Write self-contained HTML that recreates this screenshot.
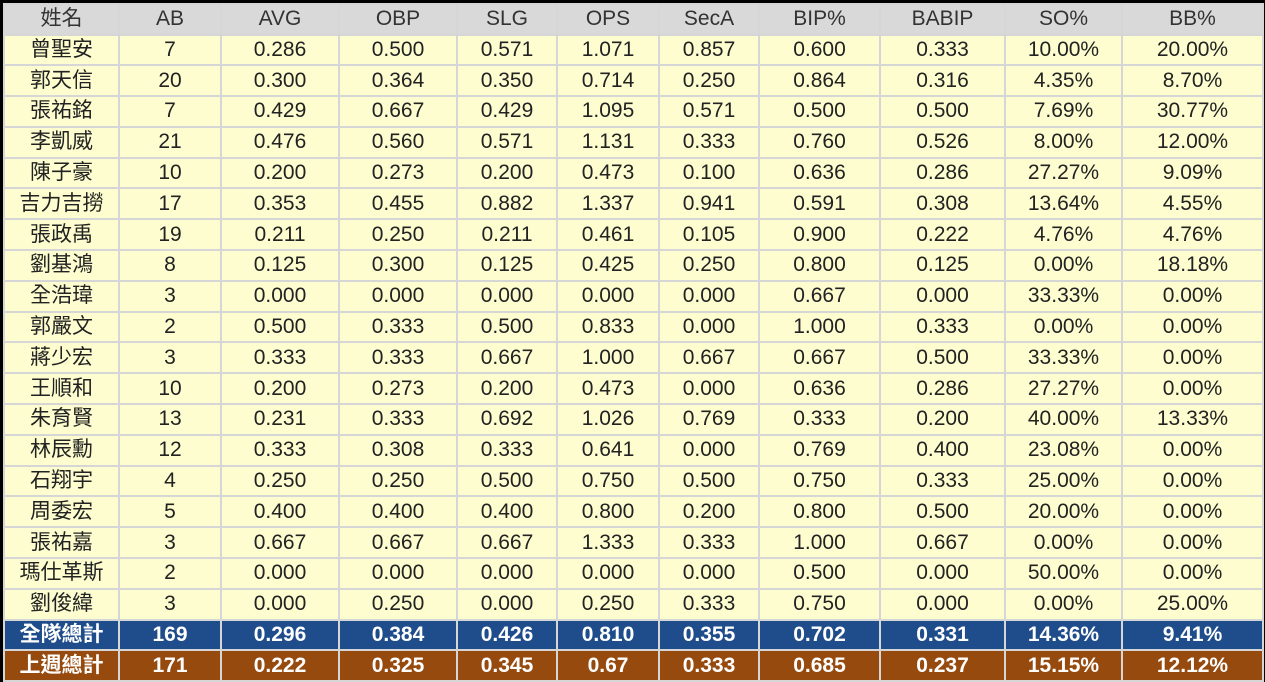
<!DOCTYPE html>
<html><head><meta charset="utf-8"><style>
html,body{margin:0;padding:0;background:#000;width:1265px;height:678px;overflow:hidden}
table{position:absolute;left:3px;top:3px;border-collapse:collapse;table-layout:fixed;font-family:"Liberation Sans","Noto Sans CJK TC",sans-serif;font-size:21px;color:#222}
td{border:2px solid #d6d6d6;text-align:center;padding:0;height:28.8px;line-height:28px;background:#fdfdd0;white-space:nowrap;overflow:hidden}
tr.h td{background:#d9d9d9;color:#333;height:28.5px}
tr.t td{background:#1f4c8a;color:#fff;font-weight:bold}
tr.l td{background:#974a0e;color:#fff;font-weight:bold}
</style></head><body>
<table>
<colgroup><col style="width:115px"><col style="width:102px"><col style="width:118px"><col style="width:118px"><col style="width:100px"><col style="width:102px"><col style="width:100px"><col style="width:121px"><col style="width:125px"><col style="width:117px"><col style="width:141px"></colgroup>
<tr class="h"><td>姓名</td><td>AB</td><td>AVG</td><td>OBP</td><td>SLG</td><td>OPS</td><td>SecA</td><td>BIP%</td><td>BABIP</td><td>SO%</td><td>BB%</td></tr>
<tr><td>曾聖安</td><td>7</td><td>0.286</td><td>0.500</td><td>0.571</td><td>1.071</td><td>0.857</td><td>0.600</td><td>0.333</td><td>10.00%</td><td>20.00%</td></tr>
<tr><td>郭天信</td><td>20</td><td>0.300</td><td>0.364</td><td>0.350</td><td>0.714</td><td>0.250</td><td>0.864</td><td>0.316</td><td>4.35%</td><td>8.70%</td></tr>
<tr><td>張祐銘</td><td>7</td><td>0.429</td><td>0.667</td><td>0.429</td><td>1.095</td><td>0.571</td><td>0.500</td><td>0.500</td><td>7.69%</td><td>30.77%</td></tr>
<tr><td>李凱威</td><td>21</td><td>0.476</td><td>0.560</td><td>0.571</td><td>1.131</td><td>0.333</td><td>0.760</td><td>0.526</td><td>8.00%</td><td>12.00%</td></tr>
<tr><td>陳子豪</td><td>10</td><td>0.200</td><td>0.273</td><td>0.200</td><td>0.473</td><td>0.100</td><td>0.636</td><td>0.286</td><td>27.27%</td><td>9.09%</td></tr>
<tr><td>吉力吉撈</td><td>17</td><td>0.353</td><td>0.455</td><td>0.882</td><td>1.337</td><td>0.941</td><td>0.591</td><td>0.308</td><td>13.64%</td><td>4.55%</td></tr>
<tr><td>張政禹</td><td>19</td><td>0.211</td><td>0.250</td><td>0.211</td><td>0.461</td><td>0.105</td><td>0.900</td><td>0.222</td><td>4.76%</td><td>4.76%</td></tr>
<tr><td>劉基鴻</td><td>8</td><td>0.125</td><td>0.300</td><td>0.125</td><td>0.425</td><td>0.250</td><td>0.800</td><td>0.125</td><td>0.00%</td><td>18.18%</td></tr>
<tr><td>全浩瑋</td><td>3</td><td>0.000</td><td>0.000</td><td>0.000</td><td>0.000</td><td>0.000</td><td>0.667</td><td>0.000</td><td>33.33%</td><td>0.00%</td></tr>
<tr><td>郭嚴文</td><td>2</td><td>0.500</td><td>0.333</td><td>0.500</td><td>0.833</td><td>0.000</td><td>1.000</td><td>0.333</td><td>0.00%</td><td>0.00%</td></tr>
<tr><td>蔣少宏</td><td>3</td><td>0.333</td><td>0.333</td><td>0.667</td><td>1.000</td><td>0.667</td><td>0.667</td><td>0.500</td><td>33.33%</td><td>0.00%</td></tr>
<tr><td>王順和</td><td>10</td><td>0.200</td><td>0.273</td><td>0.200</td><td>0.473</td><td>0.000</td><td>0.636</td><td>0.286</td><td>27.27%</td><td>0.00%</td></tr>
<tr><td>朱育賢</td><td>13</td><td>0.231</td><td>0.333</td><td>0.692</td><td>1.026</td><td>0.769</td><td>0.333</td><td>0.200</td><td>40.00%</td><td>13.33%</td></tr>
<tr><td>林辰勳</td><td>12</td><td>0.333</td><td>0.308</td><td>0.333</td><td>0.641</td><td>0.000</td><td>0.769</td><td>0.400</td><td>23.08%</td><td>0.00%</td></tr>
<tr><td>石翔宇</td><td>4</td><td>0.250</td><td>0.250</td><td>0.500</td><td>0.750</td><td>0.500</td><td>0.750</td><td>0.333</td><td>25.00%</td><td>0.00%</td></tr>
<tr><td>周委宏</td><td>5</td><td>0.400</td><td>0.400</td><td>0.400</td><td>0.800</td><td>0.200</td><td>0.800</td><td>0.500</td><td>20.00%</td><td>0.00%</td></tr>
<tr><td>張祐嘉</td><td>3</td><td>0.667</td><td>0.667</td><td>0.667</td><td>1.333</td><td>0.333</td><td>1.000</td><td>0.667</td><td>0.00%</td><td>0.00%</td></tr>
<tr><td>瑪仕革斯</td><td>2</td><td>0.000</td><td>0.000</td><td>0.000</td><td>0.000</td><td>0.000</td><td>0.500</td><td>0.000</td><td>50.00%</td><td>0.00%</td></tr>
<tr><td>劉俊緯</td><td>3</td><td>0.000</td><td>0.250</td><td>0.000</td><td>0.250</td><td>0.333</td><td>0.750</td><td>0.000</td><td>0.00%</td><td>25.00%</td></tr>
<tr class="t"><td>全隊總計</td><td>169</td><td>0.296</td><td>0.384</td><td>0.426</td><td>0.810</td><td>0.355</td><td>0.702</td><td>0.331</td><td>14.36%</td><td>9.41%</td></tr>
<tr class="l"><td>上週總計</td><td>171</td><td>0.222</td><td>0.325</td><td>0.345</td><td>0.67</td><td>0.333</td><td>0.685</td><td>0.237</td><td>15.15%</td><td>12.12%</td></tr>
</table>
</body></html>
